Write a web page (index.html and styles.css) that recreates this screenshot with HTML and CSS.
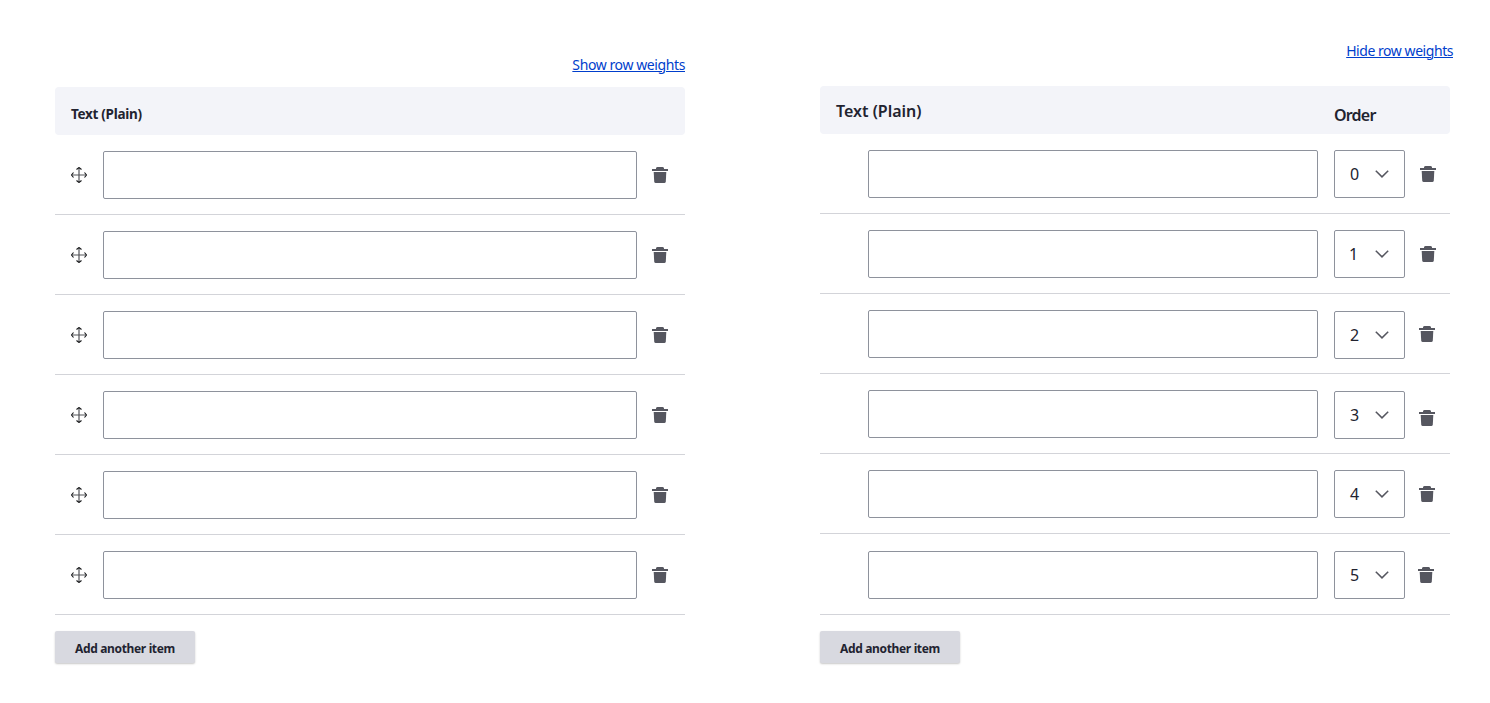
FILE: index.html
```
<!DOCTYPE html>
<html lang="en">
<head>
<meta charset="utf-8">
<title>Row weights</title>
<link rel="stylesheet" href="styles.css">
</head>
<body>
<svg class="defs" width="0" height="0" aria-hidden="true">
  <symbol id="trash" viewBox="0 0 16 16"><path d="M4 2V1.200Q4.300 0 5.500 0h5Q11.700 0 12 1.200V2h4v2H0V2z"/><path d="M1.700 5h12.600l-.5 9.500Q13.600 16 12.300 16H3.700Q2.400 16 2.200 14.500z"/></symbol>
  <symbol id="move" viewBox="0 0 16 16"><path class="shaft" d="M8 1v14M1 8h14"/><path class="tips" d="M5.500 2.500 8 .5l2.500 2M5.500 13.500 8 15.500l2.500-2M2.500 5.500.5 8l2 2.500M13.500 5.500 15.500 8l-2 2.500"/></symbol>
  <symbol id="chevron" viewBox="0 0 14 8"><path class="line" d="M.8.7 7 6.900 13.200.7"/></symbol>
</svg>
<main class="page">
  <section class="panel panel-drag">
    <a class="toggle" href="#">Show row weights</a>
    <header class="head"><span class="title">Text (Plain)</span></header>
    <div class="row"><svg class="move"><use href="#move"/></svg><input class="field" type="text"><svg class="trash"><use href="#trash"/></svg></div>
    <div class="row"><svg class="move"><use href="#move"/></svg><input class="field" type="text"><svg class="trash"><use href="#trash"/></svg></div>
    <div class="row"><svg class="move"><use href="#move"/></svg><input class="field" type="text"><svg class="trash"><use href="#trash"/></svg></div>
    <div class="row"><svg class="move"><use href="#move"/></svg><input class="field" type="text"><svg class="trash"><use href="#trash"/></svg></div>
    <div class="row"><svg class="move"><use href="#move"/></svg><input class="field" type="text"><svg class="trash"><use href="#trash"/></svg></div>
    <div class="row"><svg class="move"><use href="#move"/></svg><input class="field" type="text"><svg class="trash"><use href="#trash"/></svg></div>
    <button class="add">Add another item</button>
  </section>
  <section class="panel panel-weights">
    <a class="toggle" href="#">Hide row weights</a>
    <header class="head"><span class="title">Text (Plain)</span><span class="order">Order</span></header>
    <div class="row"><input class="field" type="text"><div class="select"><span class="num">0</span><svg class="chevron"><use href="#chevron"/></svg></div><svg class="trash"><use href="#trash"/></svg></div>
    <div class="row"><input class="field" type="text"><div class="select"><span class="num num-one">1</span><svg class="chevron"><use href="#chevron"/></svg></div><svg class="trash"><use href="#trash"/></svg></div>
    <div class="row"><input class="field" type="text"><div class="select select-low"><span class="num">2</span><svg class="chevron"><use href="#chevron"/></svg></div><svg class="trash trash-near"><use href="#trash"/></svg></div>
    <div class="row"><input class="field" type="text"><div class="select select-low"><span class="num">3</span><svg class="chevron"><use href="#chevron"/></svg></div><svg class="trash trash-near trash-low"><use href="#trash"/></svg></div>
    <div class="row"><input class="field" type="text"><div class="select"><span class="num">4</span><svg class="chevron"><use href="#chevron"/></svg></div><svg class="trash trash-near"><use href="#trash"/></svg></div>
    <div class="row row-last"><input class="field" type="text"><div class="select"><span class="num">5</span><svg class="chevron"><use href="#chevron"/></svg></div><svg class="trash trash-nearest"><use href="#trash"/></svg></div>
    <button class="add">Add another item</button>
  </section>
</main>
</body>
</html>
```
FILE: styles.css
```
* { box-sizing: border-box; }
body {
  margin: 0;
  background: #fff;
  color: #222330;
  font-family: "Noto Sans", sans-serif;
}
.defs { display: block; }
.page { display: flex; gap: 135px; padding-left: 55px; height: 703px; overflow: hidden; }
.panel { display: flex; flex-direction: column; width: 630px; flex: none; }
.panel-drag { padding-top: 55px; }
.panel-weights { padding-top: 41px; }
.toggle {
  align-self: flex-end;
  height: 20px;
  color: #003ecc;
  font-size: 14px;
  line-height: 20px;
  letter-spacing: -0.4px;
  white-space: nowrap;
  text-underline-offset: 1px;
  text-decoration-thickness: 1px;
}
.panel-drag .toggle { margin-bottom: 12px; }
.panel-weights .toggle { margin: 0 -3px 25px 0; letter-spacing: -0.45px; }
.head {
  display: flex;
  height: 48px;
  flex: none;
  padding: 0 16px;
  background: #f3f4f9;
  border-radius: 4px;
  white-space: nowrap;
}
.title { font-size: 13.5px; font-weight: 700; line-height: 20px; padding-top: 17px; letter-spacing: -0.3px; }
.panel-weights .title { width: 498px; font-size: 16px; font-weight: 600; padding-top: 15px; letter-spacing: 0; }
.order { font-size: 16px; font-weight: 600; line-height: 20px; padding-top: 19px; letter-spacing: -0.8px; }
.row {
  display: flex;
  align-items: flex-start;
  height: 80px;
  flex: none;
  padding: 16px 0 0 16px;
  border-bottom: 1px solid #d3d4d9;
}
.panel-weights .row { padding-left: 48px; }
.panel-weights .row-last { height: 81px; padding-top: 17px; }
.field {
  width: 534px;
  height: 48px;
  margin: 0 15px 0 16px;
  padding: 0 15px;
  border: 1px solid #8e929c;
  border-radius: 2px;
  background: #fff;
  font: inherit;
}
.panel-weights .field { width: 450px; margin: 0 16px 0 0; }
.select {
  display: flex;
  align-items: center;
  width: 71px;
  height: 48px;
  margin-right: 15px;
  padding: 0 15px;
  border: 1px solid #8e929c;
  border-radius: 2px;
}
.select-low { margin-top: 1px; }
.num { width: 25px; font-size: 16px; line-height: 20px; }
.num-one { text-indent: -1px; }
.move, .trash { width: 16px; height: 16px; margin-top: 16px; flex: none; fill: #55565f; }
.shaft { fill: none; stroke: #55565b; stroke-width: 1.2; }
.tips { fill: none; stroke: #161719; stroke-width: 1.1; }
.trash-near { margin-left: -1px; }
.trash-nearest { margin-left: -2px; }
.trash-low { margin-top: 20px; }
.chevron { width: 14px; height: 8px; flex: none; }
.line { fill: none; stroke: #55565f; stroke-width: 1.5; }
.add {
  align-self: flex-start;
  width: 140px;
  height: 32px;
  margin-top: 16px;
  padding: 3px 0 0;
  border: 0;
  border-radius: 2px;
  background: #d8d9e0;
  box-shadow: 0 1px 2px rgba(0, 0, 0, .22);
  color: #222330;
  font: 700 12px/29px "Noto Sans", sans-serif;
  letter-spacing: -0.35px;
  white-space: nowrap;
}
```
